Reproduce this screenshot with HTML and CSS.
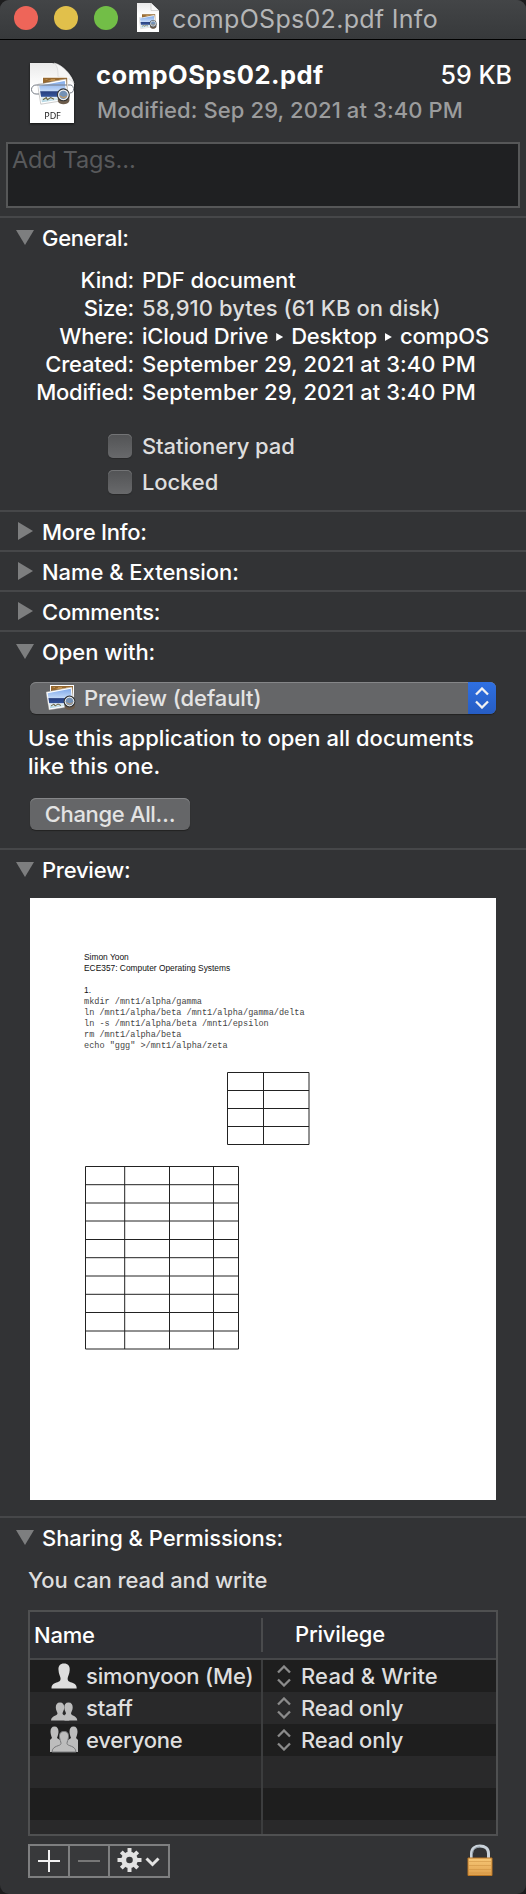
FILE: index.html
```html
<!DOCTYPE html>
<html lang="en">
<head>
<meta charset="utf-8">
<title>compOSps02.pdf Info</title>
<link rel="stylesheet" href="styles.css">
</head>
<body>
<svg class="defs" aria-hidden="true">
  <defs>
    <linearGradient id="sky" x1="0" y1="0" x2="0" y2="1"><stop offset="0" stop-color="#7fa9ea"/><stop offset=".48" stop-color="#c4daf8"/><stop offset=".5" stop-color="#28407f"/><stop offset=".72" stop-color="#34549a"/><stop offset=".76" stop-color="#e6eef2"/><stop offset="1" stop-color="#a9d3e2"/></linearGradient>
    <linearGradient id="sheet" x1="0" y1="0" x2="0" y2="1"><stop offset="0" stop-color="#e9e9e9"/><stop offset=".4" stop-color="#fff"/></linearGradient>
    <linearGradient id="brass" x1="0" y1="0" x2="0" y2="1"><stop offset="0" stop-color="#f7c878"/><stop offset="1" stop-color="#dfa04c"/></linearGradient>
    <symbol id="photos" viewBox="0 0 30 28">
      <path d="M4 1h24v22H4z" fill="#fff"/><path d="M5 2h22v20H5z" fill="#96682f"/><path d="M6 3h3v1h3V3h4v1h4V3h5v5h-3z" fill="#c09252"/>
      <path d="M0 8 26 3l2 19L3 26z" fill="#fff" stroke="#8b8b8b" stroke-width=".4"/><path d="M1.6 9.2 24.8 4.8l1.6 16L4 24.3z" fill="url(#sky)"/>
      <path d="m5 22 3-2 1 2 3-2 3 1.5" fill="none" stroke="#6c6541" stroke-width="1"/>
      <path d="M18.500 18v5c1 4 9 4 10.500 0v-5z" fill="#6b5b4b"/><circle cx="23.500" cy="17.500" r="5.300" fill="#a9bdc8" stroke="#353535" stroke-width="1.200"/><circle cx="23.500" cy="17.500" r="4.300" fill="#7491b4" stroke="#eee" stroke-width="1"/><path d="M20.500 18.500c2 2 4.500 2 6 0" fill="none" stroke="#c79d65"/>
    </symbol>
    <symbol id="arrows" viewBox="0 0 14 22"><path d="m1 7.500 6-6 6 6M1 14.500l6 6 6-6" fill="none" stroke="currentColor" stroke-width="2.300"/></symbol>
  </defs>
</svg>
<main class="window">
  <header class="titlebar">
    <i class="light red"></i><i class="light yellow"></i><i class="light green"></i>
    <svg class="doc-small" viewBox="0 0 22 29"><path d="M0 0h14l8 8v21H0z" fill="url(#sheet)"/><path d="M14 0v7.500h8" fill="#f8f8f8" stroke="#c5c5c5" stroke-width=".7"/><use href="#photos" x="2" y="10" width="18" height="17"/></svg>
    <h1 class="title">compOSps02.pdf Info</h1>
  </header>
  <section class="summary">
    <svg class="doc-large" viewBox="0 0 44 60"><path d="M0 0h22c8 0 22 13 22 22v38H0z" fill="url(#sheet)"/><path d="M24 0c4 3 4 8 4 14 7 0 13 1 16 7C42 12 33 2 24 0z" fill="#f5f5f5" stroke="#d0d0d0" stroke-width=".6"/><use href="#photos" x="7.500" y="12.500" width="33" height="31"/><path d="M9 22H6a4.500 4.500 0 0 0 0 9h3M38 22h1a4 4 0 0 1 1 8M9 22h28" fill="none" stroke="#757b84" stroke-width="1"/><text class="pdf-label" x="22.500" y="56">PDF</text></svg>
    <div class="summary-text">
      <div class="summary-line"><b class="filename">compOSps02.pdf</b><span class="filesize">59 KB</span></div>
      <div class="modified">Modified: Sep 29, 2021 at 3:40 PM</div>
    </div>
  </section>
  <div class="tags">Add Tags…</div>

  <section class="section general">
    <h2 class="heading open">General:</h2>
    <dl class="facts">
      <dt>Kind:</dt><dd>PDF document</dd>
      <dt>Size:</dt><dd class="date soft">58,910 bytes (61 KB on disk)</dd>
      <dt>Where:</dt><dd class="path"><span>iCloud Drive</span><i></i><span>Desktop</span><i></i><span>compOS</span></dd>
      <dt>Created:</dt><dd class="date">September 29, 2021 at 3:40 PM</dd>
      <dt>Modified:</dt><dd class="date">September 29, 2021 at 3:40 PM</dd>
    </dl>
    <div class="checks">
      <label class="check"><i></i>Stationery pad</label>
      <label class="check"><i></i>Locked</label>
    </div>
  </section>
  <section class="section"><h2 class="heading">More Info:</h2></section>
  <section class="section"><h2 class="heading wide">Name &amp; Extension:</h2></section>
  <section class="section"><h2 class="heading">Comments:</h2></section>
  <section class="section open-with">
    <h2 class="heading open wide">Open with:</h2>
    <div class="popup"><svg class="app-icon"><use href="#photos"/></svg><span class="popup-label">Preview (default)</span><span class="popup-cap"><svg class="arrows"><use href="#arrows"/></svg></span></div>
    <p class="hint">Use this application to open all documents<br>like this one.</p>
    <button class="button">Change All…</button>
  </section>
  <section class="section preview">
    <h2 class="heading open">Preview:</h2>
    <div class="paper">
      <p class="paper-head">Simon Yoon<br>ECE357: Computer Operating Systems<br><br>1.</p>
      <pre class="code">mkdir /mnt1/alpha/gamma
ln /mnt1/alpha/beta /mnt1/alpha/gamma/delta
ln -s /mnt1/alpha/beta /mnt1/epsilon
rm /mnt1/alpha/beta
echo "ggg" &gt;/mnt1/alpha/zeta</pre>
      <svg class="grid-small" viewBox="0 0 83 74"><path d="M.5 .5h81.500v72H.5zM36.500 .5v72M0 18.500h82M0 36.500h82M0 54.500h82"/></svg>
      <svg class="grid-large" viewBox="0 0 155 184"><path d="M.5 .5h153v182.500H.5zM39.700 .5V183M84.500 .5V183M128.500 .5V183M0 18.700h154M0 37h154M0 55h154M0 73.500h154M0 91.700h154M0 110h154M0 128.300h154M0 146.500h154M0 165h154"/></svg>
    </div>
  </section>
  <section class="section sharing">
    <h2 class="heading open wide">Sharing &amp; Permissions:</h2>
    <p class="access">You can read and write</p>
    <div class="table">
      <div class="row head"><span class="cell">Name</span><span class="cell">Privilege</span></div>
      <div class="row"><span class="cell"><svg class="who" viewBox="0 0 28 32"><path d="M14 3.500c4 0 6 2.500 5.700 6.500-.2 4-1.700 6-2 8-.3 3 1 3.500 4 4.500 3.500 1.200 5 2.500 5 6H1.500c0-3.500 1.500-4.800 5-6 3-1 4.300-1.500 4-4.500-.3-2-1.800-4-2-8C8.200 6 10 3.500 14 3.500z"/></svg>simonyoon (Me)</span><span class="cell"><svg class="arrows"><use href="#arrows"/></svg><span class="rw">Read &amp; Write</span></span></div>
      <div class="row"><span class="cell"><svg class="who dim" viewBox="0 0 28 32"><path d="M10 10.500c3 0 4.300 2 4.200 5-.1 3-1.500 4-1.700 6 .2 2.500 6.500 2 6.800 7H1c.3-5 6.300-4.500 6.500-7-.2-2-1.600-3-1.700-6-.1-3 1.200-5 4.200-5z"/><path d="M18.500 10.500c3 0 4.300 2 4.200 5-.1 3-1.500 4-1.700 6 .2 2.500 6 2 6.300 7H14.500V23c1-.5 1.500-1 1.500-1.500-.2-2-1.600-3-1.700-6-.1-3 1.200-5 4.200-5z"/></svg>staff</span><span class="cell"><svg class="arrows"><use href="#arrows"/></svg>Read only</span></div>
      <div class="row"><span class="cell"><svg class="who dim" viewBox="0 0 28 32"><path d="M0 28V16l2-2C-.5 8 0 2.500 4.500 2.500S9.500 8 7 14l3 2h8l3-2c-2.500-6-2-11.500 2.500-11.500S28.500 8 26 14l2 2v12z"/><path class="front" d="M14 7.500c3.500 0 4.700 2 4.500 5.500-.2 3-1.500 4.500-1.500 6.500.2 3 8.500 1.500 9 8.500H2c.5-7 8.800-5.500 9-8.500 0-2-1.300-3.500-1.500-6.500-.2-3.500 1-5.500 4.500-5.500z"/></svg>everyone</span><span class="cell"><svg class="arrows"><use href="#arrows"/></svg>Read only</span></div>
      <div class="row"><span class="cell"></span><span class="cell"></span></div>
      <div class="row"><span class="cell"></span><span class="cell"></span></div>
      <div class="row last"><span class="cell"></span><span class="cell"></span></div>
    </div>
    <div class="footer">
      <div class="tools">
        <svg class="tool" viewBox="0 0 38 30"><path d="M8 15h22M19 4v22" stroke="#f2f2f2" stroke-width="2"/></svg>
        <svg class="tool" viewBox="0 0 38 30"><path d="M8 15h22" stroke="#777" stroke-width="2"/></svg>
        <svg class="tool wide" viewBox="0 0 58 30"><g stroke="#e2e2e2" fill="none"><circle cx="19.500" cy="14" r="5.800" stroke-width="5"/><path stroke-width="4" d="M19.500 2v5M19.500 21v5M7.500 14h5M26.500 14h5M11.300 5.800l3 3M24.700 19.200l3 3M27.700 5.800l-3 3M14.300 19.200l-3 3"/><path stroke-width="3" d="m36.500 12.500 6 6 6-6"/></g></svg>
      </div>
      <svg class="lock" viewBox="0 0 26 34"><path d="M4.500 15V9.500C4.500 4.500 8 2 13 2s8.500 2.500 8.500 7.500V15" fill="none" stroke="#c9d2da" stroke-width="3"/><path d="M5.500 14V9.500C6 5 9 3 13 3" fill="none" stroke="#75808a" stroke-width=".8"/><path d="M1 14h24v17.500H1z" fill="url(#brass)" stroke="#b87524" stroke-width="1"/><path d="M2 17.500h22M2 21.500h22M2 25.500h22M2 29h22" stroke="#c98d3e" stroke-width=".5"/></svg>
    </div>
  </section>
</main>
</body>
</html>
```
FILE: styles.css
```css
* { box-sizing: border-box; }
body { margin: 0; background: #1d1d1e; font: 22px/28px Inter, "Liberation Sans", sans-serif; letter-spacing: -.1px; color: #fff; }
h1, h2, p, dl, dd, pre { margin: 0; font-weight: 500; }
.defs { position: absolute; width: 0; height: 0; }
.window { height: 1894px; background: #323335; border-radius: 9px; overflow: hidden; font-weight: 500; }
.titlebar { display: flex; align-items: flex-start; height: 40px; padding: 6px 0 0 14px; background: linear-gradient(#434547, #37393b); border-bottom: 1px solid #000; }
.light { width: 24px; height: 24px; margin-right: 16px; border-radius: 50%; }
.red { background: #ee6559; }
.yellow { background: #e1c04b; }
.green { background: #72be47; }
.doc-small { width: 22px; height: 29px; margin: -3px 13px 0 3px; }
.title { font-size: 25px; line-height: 28px; margin-top: -1px; font-weight: 400; letter-spacing: .3px; color: #b4b5b6; white-space: nowrap; }
.summary { display: flex; height: 102px; padding: 23px 14px 0 30px; }
.doc-large { width: 44px; height: 60px; margin-right: 22px; overflow: visible; filter: drop-shadow(0 1px 1px #111); }
.pdf-label { font: 9px "Noto Sans", sans-serif; text-anchor: middle; fill: #222; }
.summary-text { flex: 1; }
.summary-line { display: flex; justify-content: space-between; line-height: 32px; margin-top: -4px; }
.filename { font-size: 25.5px; font-weight: 700; letter-spacing: .5px; }
.filesize { font-size: 25px; letter-spacing: 0; }
.modified { color: #9b9c9d; padding: 5px 0 0 1px; letter-spacing: .1px; }
.tags { height: 66px; margin: 0 6px 8px; padding: 1px 4px; border: 2px solid #565758; background: #1f2022; color: #58595b; font-size: 23.5px; line-height: 30px; font-weight: 400; letter-spacing: -.2px; }
.section { border-top: 2px solid #464749; height: 40px; }
.heading { display: flex; align-items: center; height: 38px; padding: 2px 0 0 42px; font-size: 22px; letter-spacing: -.25px; position: relative; }
.heading.wide { letter-spacing: -.05px; }
.heading::before { content: ""; position: absolute; left: 18px; top: 10px; width: 15px; height: 18px; background: #7d7e7f; clip-path: polygon(0 0, 100% 50%, 0 100%); }
.heading.open::before { left: 16px; top: 12px; width: 18px; height: 15px; clip-path: polygon(0 0, 100% 0, 50% 100%); }
.general { height: 294px; }
.facts { display: grid; grid-template-columns: 134px 1fr; column-gap: 8px; grid-auto-rows: 28px; padding-top: 10px; white-space: nowrap; }
.facts dt { text-align: right; letter-spacing: -.2px; }
.facts .date { letter-spacing: .07px; }
.soft, .check, .access { color: #dedede; }
.facts .path { display: flex; align-items: center; letter-spacing: -.2px; }
.path i { width: 7px; height: 8px; margin: 2px 8px 0; background: #fff; clip-path: polygon(0 0, 100% 50%, 0 100%); }
.checks { display: grid; gap: 12px; padding: 28px 0 0 108px; }
.check { display: flex; align-items: center; gap: 10px; height: 24px; }
.check i { width: 24px; height: 24px; border-radius: 5px; background: linear-gradient(#525355, #68696b); box-shadow: inset 0 1px #737476, 0 1px 1px #28292a; }
.open-with { height: 218px; }
.popup { display: flex; align-items: center; height: 32px; margin: 12px 30px 0; border-radius: 6px; overflow: hidden; background: #656668; box-shadow: inset 0 1px #858688, 0 1px 1px #222; color: #e3e3e3; }
.app-icon { width: 30px; height: 28px; margin: 0 8px 0 16px; }
.popup-cap { display: grid; place-items: center; width: 28px; height: 32px; margin-left: auto; background: linear-gradient(#2f70e2, #265dc4); color: #f2f2f2; }
.arrows { width: 14px; height: 22px; }
.hint { padding: 10px 0 0 28px; letter-spacing: .02px; }
.button { display: block; width: 160px; height: 32px; margin: 18px 0 0 30px; padding: 0; border: 0; border-radius: 6px; background: #656668; box-shadow: inset 0 1px #858688, 0 1px 1px #222; color: #e3e3e3; font: inherit; letter-spacing: -.35px; }
.preview { height: 668px; }
.paper { width: 466px; height: 602px; margin: 10px 30px 0; padding: 54px 0 0 54px; background: #fff; color: #111; letter-spacing: 0; }
.paper-head { font: 8.4px/11px "Liberation Sans", Arial, sans-serif; }
.code { font: 8.55px/10.9px "Liberation Mono", monospace; color: #444; padding-top: 1px; }
.grid-small, .grid-large { display: block; fill: none; stroke: #222; stroke-width: 1; }
.grid-small { width: 83px; height: 74px; margin: 20px 0 0 143px; }
.grid-large { width: 155px; height: 184px; margin: 20px 0 0 1px; }
.access { padding: 10px 0 8px 28px; }
.table { height: 226px; margin: 8px 28px 0; border: 2px solid #4f5051; overflow: hidden; background: #1e1e1e; }
.row { display: grid; grid-template-columns: 233px 1fr; height: 32px; color: #dedede; }
.row:nth-child(odd) { background: #29292a; }
.row.head { height: 48px; background: #2e2f33; border-bottom: 2px solid #464749; color: #fff; letter-spacing: -.3px; }
.row:nth-child(2n+2) { background: #1e1e1e; }
.row.last { height: 14px; }
.cell { display: flex; align-items: center; white-space: nowrap; padding-bottom: 1px; }
.cell:first-child { border-right: 2px solid #3c3d3e; padding-left: 20px; letter-spacing: -.2px; }
.cell:last-child { padding-left: 14px; gap: 10px; letter-spacing: -.2px; }
.cell .rw { letter-spacing: .15px; }
.head .cell { padding-bottom: 1px; }
.head .cell:first-child { padding-left: 4px; border: 0; }
.head .cell:last-child { height: 34px; margin: 6px 0 0 -2px; border-left: 2px solid #4a4b4d; padding: 0 0 2px 32px; }
.who { width: 28px; height: 32px; margin-right: 8px; fill: #dedede; }
.who.dim { fill: #bdbdbd; }
.front { stroke: #77787a; stroke-width: 1; }
.cell .arrows { color: #8b8b8b; }
.footer { display: flex; justify-content: space-between; padding: 8px 33px 0 28px; }
.tools { display: flex; gap: 2px; padding: 2px; background: #7e7f80; height: 34px; }
.tool { width: 38px; height: 30px; background: #38393b; }
.tool.wide { width: 58px; }
.lock { width: 26px; height: 34px; }
```
